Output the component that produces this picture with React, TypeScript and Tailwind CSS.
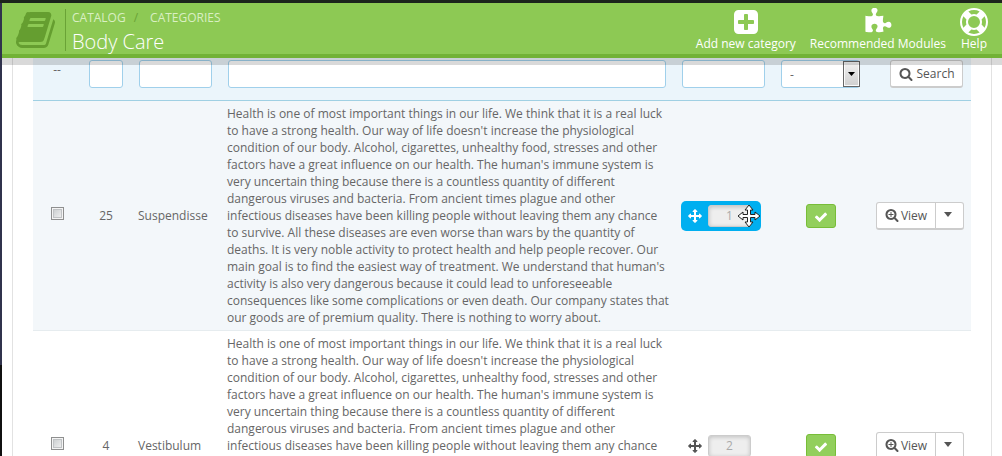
import { useState } from "react";
import type { ReactNode } from "react";

type Category = {
  id: number;
  name: string;
  position: number;
  isDragged: boolean;
};

const DESCRIPTION =
  "Health is one of most important things in our life. We think that it is a real luck to have a strong health. Our way of life doesn't increase the physiological condition of our body. Alcohol, cigarettes, unhealthy food, stresses and other factors have a great influence on our health. The human's immune system is very uncertain thing because there is a countless quantity of different dangerous viruses and bacteria. From ancient times plague and other infectious diseases have been killing people without leaving them any chance to survive. All these diseases are even worse than wars by the quantity of deaths. It is very noble activity to protect health and help people recover. Our main goal is to find the easiest way of treatment. We understand that human's activity is also very dangerous because it could lead to unforeseeable consequences like some complications or even death. Our company states that our goods are of premium quality. There is nothing to worry about.";

const CATEGORIES: Category[] = [
  { id: 25, name: "Suspendisse", position: 1, isDragged: true },
  { id: 4, name: "Vestibulum", position: 2, isDragged: false },
];

const LENS =
  "m128 32q0-185-131.5-316.5t-316.5-131.5-316.5 131.5-131.5 316.5 131.5 316.5 316.5 131.5 316.5-131.5 131.5-316.5zm512 832q0 52-38 90t-90 38q-54 0-90-38l-343-342q-179 124-399 124-143 0-273.5-55.5t-225-150-150-225-55.5-273.5 55.5-273.5 150-225 225-150 273.5-55.5 273.5 55.5 225 150 150 225 55.5 273.5q0 220-124 399l343 343q37 37 37 90z";

const ICONS = {
  book: "M1639 478q40 57 18 129l-275 906q-19 64-76.5 107.5t-122.5 43.5h-923q-77 0-148.5-53.5t-99.5-131.5q-24-67-2-127 0-4 3-27t4-37q1-8-3-21.5t-3-19.5q2-11 8-21t16.5-23.5 16.5-23.5q23-38 45-91.5t30-91.5q3-10 .5-30t-.5-28q3-11 17-28t17-23q21-36 42-92t25-90q1-9-2.5-32t.5-28q4-13 22-30.5t22-22.5q19-26 42.5-84.5t27.5-96.5q1-8-3-25.5t-2-26.5q2-8 9-18t18-23 17-21q8-12 16.5-30.5t15-35 16-36 19.5-32 26.5-23.5 36-11.5 47.5 5.5l-1 3q38-9 51-9h761q74 0 114 56t18 130l-274 906q-36 119-71.5 153.5t-128.5 34.5h-869q-27 0-38 15-11 16-1 43 24 70 144 70h923q29 0 56-15.5t35-41.5l300-987q7-22 5-57 38 15 59 43zm-1064 2q-4 13 2 22.5t20 9.5h608q13 0 25.5-9.5t16.5-22.5l21-64q4-13-2-22.5t-20-9.5h-608q-13 0-25.5 9.5t-16.5 22.5zm-83 256q-4 13 2 22.5t20 9.5h608q13 0 25.5-9.5t16.5-22.5l21-64q4-13-2-22.5t-20-9.5h-608q-13 0-25.5 9.5t-16.5 22.5z",
  plus: "M1408 960v-128q0-26-19-45t-45-19h-320v-320q0-26-19-45t-45-19h-128q-26 0-45 19t-19 45v320h-320q-26 0-45 19t-19 45v128q0 26 19 45t45 19h320v320q0 26 19 45t45 19h128q26 0 45-19t19-45v-320h320q26 0 45-19t19-45zm256-544v960q0 119-84.5 203.5t-203.5 84.5h-960q-119 0-203.5-84.5t-84.5-203.5v-960q0-119 84.5-203.5t203.5-84.5h960q119 0 203.5 84.5t84.5 203.5z",
  puzzle:
    "M1755 1082q0 81-44.5 135t-123.5 54q-41 0-77.5-17.5t-59-38-56.5-38-71-17.5q-110 0-110 124 0 39 16 115t15 115v5q-22 0-33 1-34 3-97.5 11.5t-115.5 13.5-98 5q-61 0-103-26.5t-42-83.5q0-37 17.5-71t38-56.5 38-59 17.5-77.5q0-79-54-123.5t-135-44.5q-84 0-143 45.5t-59 127.5q0 43 15 83t33.5 64.5 33.5 53 15 50.5q0 45-46 89-37 35-117 35-95 0-245-24-9-2-27.5-4t-27.5-4l-13-2q-1 0-3-1-2 0-2-1v-1024q2 1 17.5 3.5t34 5 21.5 3.5q150 24 245 24 80 0 117-35 46-44 46-89 0-22-15-50.5t-33.5-53-33.5-64.5-15-83q0-82 59-127.5t144-45.5q80 0 134 44.5t54 123.5q0 41-17.5 77.5t-38 59-38 56.5-17.5 71q0 57 42 83.5t103 26.5q64 0 180-15t163-17v2q-1 2-3.5 17.5t-5 34-3.5 21.5q-24 150-24 245 0 80 35 117 44 46 89 46 22 0 50.5-15t53-33.5 64.5-33.5 83-15q82 0 127.5 59t45.5 143z",
  ring: "M896 0q182 0 348 71t286 191 191 286 71 348-71 348-191 286-286 191-348 71-348-71-286-191-191-286-71-348 71-348 191-286 286-191 348-71zm0 128q-190 0-361 90l194 194q82-28 167-28t167 28l194-194q-171-90-361-90zm-678 1129l194-194q-28-82-28-167t28-167l-194-194q-90 171-90 361t90 361zm678 407q190 0 361-90l-194-194q-82 28-167 28t-167-28l-194 194q171 90 361 90zm0-384q159 0 271.5-112.5t112.5-271.5-112.5-271.5-271.5-112.5-271.5 112.5-112.5 271.5 112.5 271.5 271.5 112.5zm484-217l194 194q90-171 90-361t-90-361l-194 194q28 82 28 167t-28 167z",
  search: `M1088 800${LENS}`,
  zoom: `M1088 800v64q0 13-9.5 22.5t-22.5 9.5h-224v224q0 13-9.5 22.5t-22.5 9.5h-64q-13 0-22.5-9.5t-9.5-22.5v-224h-224q-13 0-22.5-9.5t-9.5-22.5v-64q0-13 9.5-22.5t22.5-9.5h224v-224q0-13 9.5-22.5t22.5-9.5h64q13 0 22.5 9.5t9.5 22.5v224h224q13 0 22.5 9.5t9.5 22.5z${LENS}`,
  arrows:
    "M1792 896q0 26-19 45l-256 256q-19 19-45 19t-45-19-19-45v-128h-384v384h128q26 0 45 19t19 45-19 45l-256 256q-19 19-45 19t-45-19l-256-256q-19-19-19-45t19-45 45-19h128v-384h-384v128q0 26-19 45t-45 19-45-19l-256-256q-19-19-19-45t19-45l256-256q19-19 45-19t45 19 19 45v128h384v-384h-128q-26 0-45-19t-19-45 19-45l256-256q19-19 45-19t45 19l256 256q19 19 19 45t-19 45-45 19h-128v384h384v-128q0-26 19-45t45-19 45 19l256 256q19 19 19 45z",
  check:
    "M1671 566q0 40-28 68l-724 724-136 136q-28 28-68 28t-68-28l-136-136-362-362q-28-28-28-68t28-68l136-136q28-28 68-28t68 28l294 295 656-657q28-28 68-28t68 28l136 136q28 28 28 68z",
};

const Icon = ({ name, className }: { name: keyof typeof ICONS; className: string }) => (
  <svg aria-hidden="true" className={className} fill="currentColor" viewBox="0 0 1792 1792">
    <path d={ICONS[name]} fillRule={name === "search" ? "evenodd" : "nonzero"} />
  </svg>
);

const HeaderAction = ({ icon, children }: { icon: keyof typeof ICONS; children: ReactNode }) => (
  <a className="flex flex-col items-center px-[7px] text-white" href="#">
    <Icon className="h-7 w-7" name={icon} />
    <span className="text-xs leading-4">{children}</span>
  </a>
);

const FilterInput = ({ label }: { label: string }) => (
  <input
    aria-label={label}
    className="block h-7 w-full rounded-[3px] border border-[#a0d0eb] bg-white px-2 text-xs"
    type="text"
  />
);

const MoveCursor = () => (
  <svg
    aria-hidden="true"
    className="pointer-events-none absolute top-[3px] right-0 h-6 w-6"
    viewBox="0 0 24 24"
  >
    <path
      d="M12 1 16 6H13.5V10.5H18V8L23 12 18 16V13.5H13.5V18H16L12 23 8 18H10.5V13.5H6V16L1 12 6 8V10.5H10.5V6H8Z"
      fill="#fff"
      stroke="#222"
      strokeLinejoin="round"
    />
  </svg>
);

const CategoryRow = ({ category }: { category: Category }) => {
  const [checked, setChecked] = useState(false);

  return (
    <tr className={`border-b border-[#e6ecef] ${category.isDragged ? "bg-[#f3f7fa]" : "bg-white"}`}>
      <td>
        <input
          aria-label={`Select ${category.name}`}
          checked={checked}
          className="mx-auto mb-1 block h-[13px] w-[13px] appearance-none border border-[#8e8f8f] bg-linear-to-br from-[#c4c8ca] to-[#f6f6f6] shadow-[inset_0_0_0_1px_#f4f4f4,inset_0_0_0_2px_#c0c3c5] checked:bg-[#00aff0]"
          onChange={(event) => setChecked(event.target.checked)}
          type="checkbox"
        />
      </td>
      <td className="text-center">{category.id}</td>
      <td className="px-[7px]">{category.name}</td>
      <td className="py-1 pr-1 pl-[7px]">{DESCRIPTION}</td>
      <td className="pl-[7px]">
        <div
          className={`relative flex h-[30px] w-20 items-center gap-1.5 rounded-[5px] pl-[7px] ${
            category.isDragged ? "bg-[#00aff0] text-white" : "text-[#555]"
          }`}
        >
          <Icon className="h-3.5 w-3.5" name="arrows" />
          <input
            aria-label={`Position of ${category.name}`}
            className="h-[22px] w-[43px] rounded-[3px] border border-[#ccc] bg-[#eee] text-center text-xs text-[#aaa] shadow-[inset_0_1px_4px_rgba(0,0,0,0.2)]"
            readOnly
            type="text"
            value={category.position}
          />
          {category.isDragged && <MoveCursor />}
        </div>
      </td>
      <td>
        <button
          aria-label={`Disable ${category.name}`}
          className="mx-auto flex h-6 w-[30px] items-center justify-center rounded-[3px] border border-[#78bd38] bg-[#92cf5c] text-white"
          type="button"
        >
          <Icon className="mt-0.5 h-3.5 w-3.5" name="check" />
        </button>
      </td>
      <td className="pr-[7px]">
        <div className="ml-auto flex h-7 w-[88px] rounded-[3px] border border-b-2 border-[#ccc] bg-white text-[#555]">
          <button className="flex flex-1 items-center justify-center gap-0.5" type="button">
            <Icon className="h-3.5 w-3.5" name="zoom" />
            View
          </button>
          <button
            aria-label={`More actions for ${category.name}`}
            className="flex w-7 items-center justify-center border-l border-[#ccc] pr-1"
            type="button"
          >
            <svg aria-hidden="true" className="mb-0.5 h-[5px] w-2" fill="currentColor" viewBox="0 0 8 5">
              <path d="M0 0h8L4 5Z" />
            </svg>
          </button>
        </div>
      </td>
    </tr>
  );
};

const PageHeader = () => (
  <header className="relative z-10 shrink-0">
    <div className="h-[3px] bg-[#1c241c]" />
    <div className="ml-0.5 flex h-[55px] items-start justify-between border-b-4 border-[#72b236] bg-[#8dc954] pr-[7px]">
      <div className="flex pt-1.5 pl-3.5">
        <Icon className="h-[42px] w-[42px] text-[#659e30]" name="book" />
        <div className="ml-[7px] h-[42px] border-l border-[#6aa336] pl-1.5">
          <nav aria-label="Breadcrumb" className="flex pt-px text-xs leading-4 text-[#d9efc3]">
            <a href="#">CATALOG</a>
            <span className="mr-3 ml-2 text-[#6aa336]">/</span>
            <a href="#">CATEGORIES</a>
          </nav>
          <h1 className="text-xl leading-8 font-light text-white">Body Care</h1>
        </div>
      </div>
      <div className="flex pt-[5px]">
        <HeaderAction icon="plus">Add new category</HeaderAction>
        <HeaderAction icon="puzzle">Recommended Modules</HeaderAction>
        <HeaderAction icon="ring">Help</HeaderAction>
      </div>
    </div>
    <div className="absolute top-full right-0 left-0.5 h-[7px] bg-black/15" />
  </header>
);

const App = () => (
  <div className="flex h-screen flex-col overflow-hidden bg-linear-to-b from-[#30324c] from-80% to-[#101010] to-80% font-['Open_Sans','Noto_Sans',sans-serif] text-xs text-[#666]">
    <PageHeader />
    <main className="ml-0.5 min-h-0 flex-1 overflow-hidden bg-white pr-2.5 pl-2.5">
      <section className="min-h-full border-x border-[#e2e2e2] px-5">
        <table className="w-full table-fixed border-collapse leading-[17px]">
          <colgroup>
            <col className="w-12" />
            <col className="w-[50px]" />
            <col className="w-[89px]" />
            <col />
            <col className="w-[99px]" />
            <col className="w-[95px]" />
            <col className="w-[103px]" />
          </colgroup>
          <thead>
            <tr className="border-b border-[#a0d0e3] bg-[#ebf5fb]">
              <td className="pt-[3px] text-center align-top">--</td>
              <td className="px-2 pt-0.5 pb-3">
                <FilterInput label="ID" />
              </td>
              <td className="px-2 pt-0.5 pb-3">
                <FilterInput label="Name" />
              </td>
              <td className="px-2 pt-0.5 pb-3">
                <FilterInput label="Description" />
              </td>
              <td className="px-2 pt-0.5 pb-3">
                <FilterInput label="Position" />
              </td>
              <td className="px-2 pt-0.5 pb-3">
                <div className="relative">
                  <select
                    aria-label="Displayed"
                    className="block h-7 w-full appearance-none rounded-[3px] border border-[#a0d0eb] bg-white px-2"
                  >
                    <option>-</option>
                    <option>Yes</option>
                    <option>No</option>
                  </select>
                  <span className="pointer-events-none absolute top-px right-0 flex h-[26px] w-[17px] items-center justify-center border border-[#666] bg-linear-to-b from-[#f2f2f2] to-[#cfcfcf] text-black shadow-[inset_0_0_0_1px_#fafafa]">
                    <svg aria-hidden="true" className="h-1 w-[7px]" fill="currentColor" viewBox="0 0 7 4">
                      <path d="M0 0h7L3.5 4Z" />
                    </svg>
                  </span>
                </div>
              </td>
              <td className="px-2 pt-0.5 pb-3">
                <button
                  className="ml-auto flex h-7 w-[73px] items-center justify-center gap-1 rounded-[3px] border border-b-2 border-[#ccc] bg-white text-[#555]"
                  type="button"
                >
                  <Icon className="h-3.5 w-3.5" name="search" />
                  Search
                </button>
              </td>
            </tr>
          </thead>
          <tbody>
            {CATEGORIES.map((category) => (
              <CategoryRow category={category} key={category.id} />
            ))}
          </tbody>
        </table>
      </section>
    </main>
  </div>
);

export default App;
